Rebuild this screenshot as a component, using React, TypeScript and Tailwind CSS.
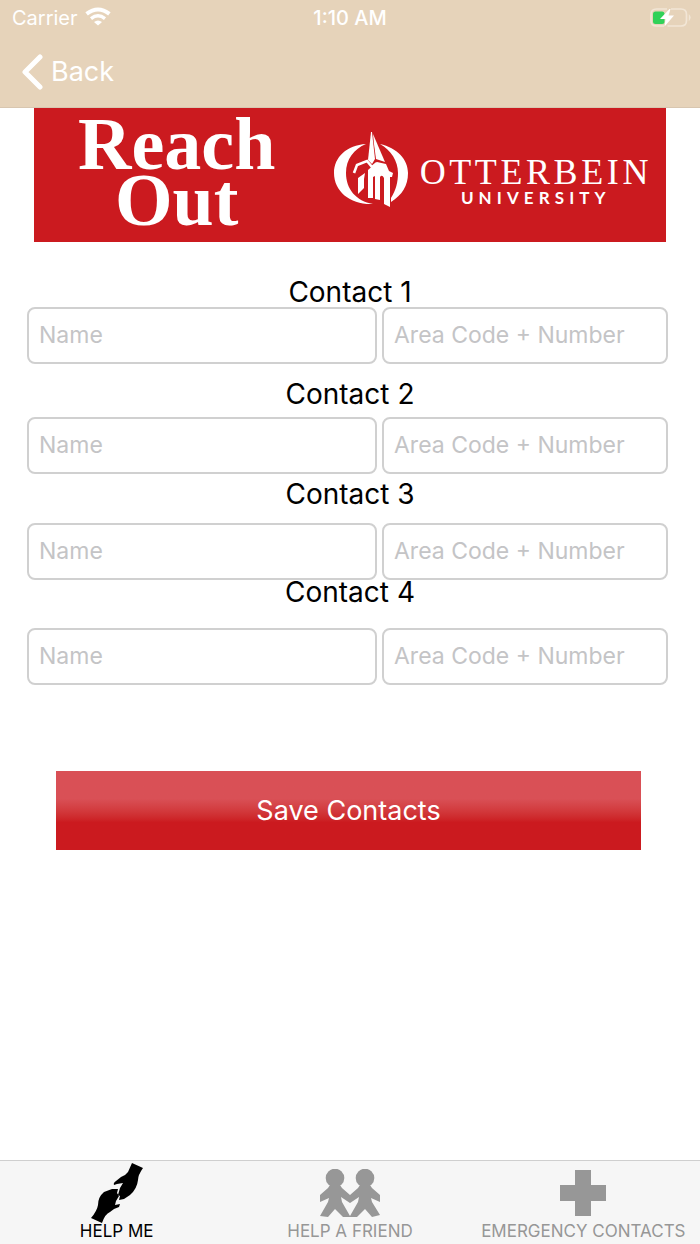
import type { ReactNode } from "react";

const contacts = [
  { id: 1, labelSpace: "mt-[38px]", fieldSpace: "mt-[3px]" },
  { id: 2, labelSpace: "mt-[18px]", fieldSpace: "mt-[11px]" },
  { id: 3, labelSpace: "mt-2", fieldSpace: "mt-[17px]" },
  { id: 4, labelSpace: "mt-0", fieldSpace: "mt-6" },
];

function StatusBar() {
  return (
    <div className="grid h-9 grid-cols-3 items-center px-2 text-[20px] leading-6">
      <div className="flex items-center gap-[7px] pl-1">
        <span>Carrier</span>
        <svg className="mb-1" width="26" height="19" viewBox="0 0 26 19" fill="none" stroke="currentColor" aria-hidden="true">
          <path d="M1.6 6.9Q13-2 24.4 6.9" strokeWidth="4" />
          <path d="M6 11.6Q13 6 20 11.6" strokeWidth="3.4" />
          <path d="M13 18.6 9 14.9Q13 11.9 17 14.9Z" fill="currentColor" stroke="none" />
        </svg>
      </div>
      <span className="text-center font-medium">1:10 AM</span>
      <svg className="justify-self-end" width="42" height="20" viewBox="0 0 42 20" fill="none" aria-hidden="true">
        <path d="M17 1H6.500Q1 1 1 6.500V12.500Q1 18 6.500 18H14M21 1H31Q36.500 1 36.500 6.500V12.500Q36.500 18 31 18H17.500" stroke="#f2e6d6" strokeWidth="1.7" />
        <path d="M38.800 6Q42.500 9.500 38.800 13.300Z" fill="#f2e6d6" />
        <rect x="3" y="3.500" width="11.500" height="12.500" rx="2.500" fill="#30d158" />
        <path d="M19.500 1 10 11H15.500L14.500 18.500 24 7.500H18.500L20.500 1Z" fill="white" />
      </svg>
    </div>
  );
}

function Emblem() {
  return (
    <svg width="76" height="78" viewBox="0 0 76 78" fill="white" aria-hidden="true">
      <path d="M32 12C13 13 0 25 0 41C0 60 17 73 39 72C22 69 12 57 12 41C12 27 20 17 32 12Z" />
      <path d="M46 12C63 16 74 27 74 41C74 54 68 63 57 70V66C62 58 64 50 64 41C64 29 57 18 46 12Z" />
      <path d="M37 0 34 28 38 32 41 27 38 0Z" />
      <path d="M39 2 51 30 42 27 40 12Z" />
      <path d="M20 41 23 33 33 29 38 35 43 31" fill="none" stroke="white" strokeWidth="2.6" />
      <path d="M24 46 31 41 30 47V56L24 62Z" />
      <path d="M34 38 43 30 52 32 55 39 59 41 58 45H56V75L50 72V46Q48 42 46 45V68L41 67V44L39 45V66H34Z" />
    </svg>
  );
}

function Banner() {
  return (
    <div className="mx-[34px] flex h-[134px] items-start justify-between bg-[#cb1a1f] text-white">
      <h1 className="ml-11 mt-2 text-center font-['Liberation_Serif',serif] text-[74px] font-bold leading-[56px]">
        Reach
        <br />
        Out
      </h1>
      <div className="flex shrink-0 items-start gap-[10px] pr-[14px] pt-6">
        <Emblem />
        <div className="pt-[22px] text-center">
          <div className="font-['Liberation_Serif',serif] text-[36px] leading-9 tracking-widest">OTTERBEIN</div>
          <div className="font-['Lato',sans-serif] text-[17px] font-bold leading-4 tracking-[0.3em]">UNIVERSITY</div>
        </div>
      </div>
    </div>
  );
}

const fieldStyle =
  "h-[57px] w-full rounded-lg border-2 border-[#d0d0d0] bg-white px-[10px] pb-[2px] text-[23px] text-black outline-none placeholder:text-[#c4c4c6] focus:border-[#999999]";

function ContactFields({ id, labelSpace, fieldSpace }: (typeof contacts)[number]) {
  return (
    <fieldset className="flex flex-col">
      <legend className="contents">
        <span className={`${labelSpace} block text-center text-[28px] leading-6`}>Contact {id}</span>
      </legend>
      <div className={`${fieldSpace} flex gap-[5px] pl-[27px] pr-8`}>
        <div className="min-w-0 flex-[350]">
          <input type="text" aria-label={`Contact ${id} name`} placeholder="Name" className={fieldStyle} />
        </div>
        <div className="min-w-0 flex-[286]">
          <input type="tel" aria-label={`Contact ${id} area code and number`} placeholder="Area Code + Number" className={fieldStyle} />
        </div>
      </div>
    </fieldset>
  );
}

function Tab({ label, active, children }: { label: string; active?: boolean; children: ReactNode }) {
  return (
    <a
      href="#"
      aria-current={active ? "page" : undefined}
      className={`flex flex-1 basis-0 flex-col items-center text-[17px] leading-5 ${active ? "text-black" : "text-[#979797]"}`}
    >
      <span className="flex h-[60px] items-center justify-center pt-1">{children}</span>
      <span className="whitespace-nowrap">{label}</span>
    </a>
  );
}

function Hands() {
  return (
    <svg width="52" height="60" viewBox="0 0 52 60" fill="currentColor" aria-hidden="true">
      <path d="M41 0 52 5Q47 12 47 17Q46 26 39 32L33 36 28 37 29 33 27 32 29 25 32 20 26 21 23 22Q22 20 25 18L30 14Q34 13 37 9Z" />
      <path d="M11 60 0 55Q6 48 7 42Q7 34 13 29L21 26 27 26 26 30 28 33 25 38 24 42 29 41 28 44 23 46 19 49Q14 51 11 60Z" />
    </svg>
  );
}

function Friends() {
  return (
    <svg width="62" height="48" viewBox="0 0 62 48" fill="currentColor" aria-hidden="true">
      <circle cx="16" cy="9" r="9.3" />
      <circle cx="46" cy="9" r="9.3" />
      <path d="M11 16H21L23 19 31 26 39 19 41 16H51L53 19 61 26V33L52 29 53 33 61 46 53 48 46 40 38 48H24L16 40 9 48 1 47 9 33 10 29 1 33V26L9 19Z" />
      <path d="M22 28 31 34 40 28 39 33 31 47 23 33Z" fill="#f6f6f6" />
    </svg>
  );
}

export default function App() {
  return (
    <div className="flex min-h-screen flex-col bg-white font-['Inter',sans-serif] text-black">
      <header className="h-[108px] bg-[#e6d3ba] text-white shadow-[inset_0_-1px_0_#d8c6b0]">
        <StatusBar />
        <nav className="flex h-[72px] items-center pl-[21px]">
          <button type="button" className="flex items-center gap-2 text-[27px] leading-8">
            <svg width="22" height="36" viewBox="0 0 22 36" fill="none" stroke="currentColor" strokeWidth="5" strokeLinecap="round" strokeLinejoin="round" aria-hidden="true">
              <path d="M19 3 4 18 19 33" />
            </svg>
            Back
          </button>
        </nav>
      </header>
      <main className="flex-1">
        <Banner />
        <form onSubmit={(event) => event.preventDefault()}>
          {contacts.map((contact) => (
            <ContactFields key={contact.id} {...contact} />
          ))}
          <div className="mt-[86px] pl-14 pr-[59px]">
            <button
              type="submit"
              className="h-[79px] w-full bg-linear-to-b from-[#d95056] from-35% to-[#cb1a1f] to-65% pt-[2px] text-[27px] text-white"
            >
              Save Contacts
            </button>
          </div>
        </form>
      </main>
      <nav className="flex h-[84px] border-t border-[#cfcfcf] bg-[#f6f6f6]">
        <Tab label="HELP ME" active>
          <Hands />
        </Tab>
        <Tab label="HELP A FRIEND">
          <Friends />
        </Tab>
        <Tab label="EMERGENCY CONTACTS">
          <svg width="46" height="46" viewBox="0 0 46 46" fill="currentColor" aria-hidden="true">
            <path d="M15 0H31V15H46V31H31V46H15V31H0V15H15Z" />
          </svg>
        </Tab>
      </nav>
    </div>
  );
}
